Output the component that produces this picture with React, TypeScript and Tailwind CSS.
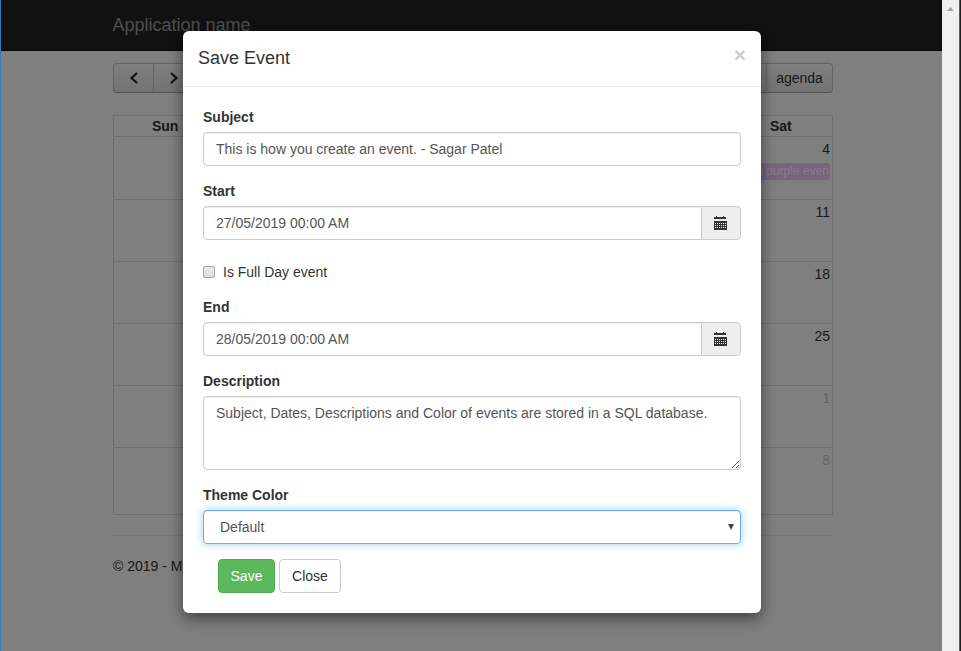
import type { ReactNode } from "react";

const weeks = [
  { day: "4", muted: false, height: "h-[63px]", event: "a purple even" },
  { day: "11", muted: false, height: "h-[62px]" },
  { day: "18", muted: false, height: "h-[62px]" },
  { day: "25", muted: false, height: "h-[62px]" },
  { day: "1", muted: true, height: "h-[62px]" },
  { day: "8", muted: true, height: "h-[67px]" },
];

const toolButton =
  "h-full border border-[#c8c8c8] border-b-[#a8a8a8] bg-linear-to-b from-white to-[#e6e6e6] text-[#333]";

const field =
  "block w-full rounded border border-[#ccc] bg-white px-3 text-sm text-[#555] shadow-[inset_0_1px_1px_rgba(0,0,0,0.075)] outline-none";

function Chevron({ d }: { d: string }) {
  return (
    <svg viewBox="0 0 10 12" className="mx-auto h-3 w-2.5" fill="none" stroke="#222" strokeWidth="2.2">
      <path d={d} />
    </svg>
  );
}

function CalendarIcon() {
  return (
    <svg viewBox="0 0 14 14" className="h-3.5 w-3.5" fill="#333" shapeRendering="crispEdges">
      <path d="M3 0h1v1h6V0h1v1h2v2H1V1h2z" />
      <path
        fillRule="evenodd"
        d="M1 5h13v9H1zM2 7v1h1V7zM4 7v1h1V7zM6 7v1h1V7zM8 7v1h1V7zM10 7v1h1V7zM12 7v1h1V7zM2 9v1h1V9zM4 9v1h1V9zM6 9v1h1V9zM8 9v1h1V9zM10 9v1h1V9zM12 9v1h1V9zM2 11v1h1v-1zM4 11v1h1v-1zM6 11v1h1v-1zM8 11v1h1v-1zM10 11v1h1v-1zM12 11v1h1v-1z"
      />
    </svg>
  );
}

function Field({ id, label, children }: { id: string; label: string; children: ReactNode }) {
  return (
    <div className="mb-[15px]">
      <label htmlFor={id} className="mb-[5px] block font-bold">
        {label}
      </label>
      {children}
    </div>
  );
}

function DateInput({ id, value }: { id: string; value: string }) {
  return (
    <div className="flex">
      <input id={id} type="text" defaultValue={value} className={`${field} h-[34px] min-w-0 flex-1 rounded-r-none`} />
      <button
        type="button"
        aria-label="Open calendar"
        className="-ml-px flex w-10 items-center rounded-r border border-[#ccc] bg-[#eee] pl-[11px]"
      >
        <CalendarIcon />
      </button>
    </div>
  );
}

function CalendarPage() {
  return (
    <div className="min-h-screen bg-white">
      <header className="h-[51px] border-b border-[#080808] bg-[#222] pl-0.5">
        <div className="mx-auto flex h-full max-w-[720px] items-center">
          <a href="#" className="text-lg leading-5 text-[#9d9d9d]">
            Application name
          </a>
        </div>
      </header>
      <main className="pt-3 pl-[3px]">
        <div className="mx-auto max-w-[720px]">
          <div className="mb-[22px] flex h-[30px] justify-between">
            <div className="flex">
              <button type="button" aria-label="Previous" className={`${toolButton} w-[41px] rounded-l`}>
                <Chevron d="M8 1 2.500 6 8 11" />
              </button>
              <button type="button" aria-label="Next" className={`${toolButton} -ml-px w-[41px] rounded-r`}>
                <Chevron d="M2 1 7.500 6 2 11" />
              </button>
            </div>
            <div className="flex">
              <button type="button" aria-label="Day" className={`${toolButton} w-11 rounded-l`} />
              <button type="button" className={`${toolButton} -ml-px w-[67px] rounded-r`}>
                agenda
              </button>
            </div>
          </div>
          <table className="w-full table-fixed border-collapse border border-[#ddd]">
            <thead>
              <tr className="h-[21px] border-b border-[#ddd]">
                <th className="font-bold">Sun</th>
                <th colSpan={5} />
                <th className="font-bold">Sat</th>
              </tr>
            </thead>
            <tbody>
              {weeks.map((week) => (
                <tr key={week.day} className={`${week.height} border-b border-[#ddd]`}>
                  <td />
                  <td colSpan={5} />
                  <td className="p-0 align-top">
                    <div className={`px-0.5 pt-0.5 text-right ${week.muted ? "text-[#333]/30" : ""}`}>{week.day}</div>
                    {week.event && (
                      <div className="mx-0.5 mt-1 flex h-[17px] justify-end overflow-hidden rounded-[3px] bg-[#f0c8ff] px-px text-xs leading-4 whitespace-nowrap text-white">
                        {week.event}
                      </div>
                    )}
                  </td>
                </tr>
              ))}
            </tbody>
          </table>
          <footer className="mt-5 border-t border-[#eee] pt-5">
            <p>© 2019 - My</p>
          </footer>
        </div>
      </main>
    </div>
  );
}

function SaveEventDialog() {
  return (
    <div
      role="dialog"
      aria-labelledby="dialog-title"
      className="mx-auto max-w-[578px] rounded-md bg-white shadow-[0_5px_15px_rgba(0,0,0,0.5)]"
    >
      <div className="flex h-14 items-start justify-between border-b border-[#e5e5e5] px-[15px] pt-3.5">
        <h4 id="dialog-title" className="text-lg leading-[26px]">
          Save Event
        </h4>
        <button type="button" aria-label="Close dialog" className="text-[21px] leading-5 font-bold text-[#ccc]">
          ×
        </button>
      </div>
      <form className="p-5" onSubmit={(e) => e.preventDefault()}>
        <Field id="subject" label="Subject">
          <input
            id="subject"
            type="text"
            defaultValue="This is how you create an event. - Sagar Patel"
            className={`${field} h-[34px]`}
          />
        </Field>
        <Field id="start" label="Start">
          <DateInput id="start" value="27/05/2019 00:00 AM" />
        </Field>
        <div className="pt-[7px] pb-[15px]">
          <label className="flex items-center gap-2">
            <input
              type="checkbox"
              className="h-3 w-3 appearance-none rounded-xs border border-[#a5a5a5] bg-linear-to-b from-[#ededed] to-[#dcdcdc]"
            />
            Is Full Day event
          </label>
        </div>
        <Field id="end" label="End">
          <DateInput id="end" value="28/05/2019 00:00 AM" />
        </Field>
        <Field id="description" label="Description">
          <textarea
            id="description"
            defaultValue="Subject, Dates, Descriptions and Color of events are stored in a SQL database."
            className={`${field} h-[74px] resize py-1.5 leading-5`}
          />
        </Field>
        <Field id="theme" label="Theme Color">
          <div className="relative">
            <select
              id="theme"
              className="block h-[34px] w-full appearance-none rounded border border-[#66afe9] bg-white px-4 text-sm text-[#555] shadow-[inset_0_1px_1px_rgba(0,0,0,0.075),0_0_8px_rgba(102,175,233,0.6)] outline-none"
            >
              <option>Default</option>
            </select>
            <svg viewBox="0 0 6 6" className="pointer-events-none absolute top-3.5 right-[7px] h-1.5 w-1.5" fill="#444">
              <path d="M0 0h6L3 6z" />
            </svg>
          </div>
        </Field>
        <div className="flex gap-1 pl-[15px]">
          <button
            type="submit"
            className="h-[34px] w-[57px] rounded border border-[#4cae4c] bg-[#5cb85c] text-white"
          >
            Save
          </button>
          <button type="button" className="h-[34px] w-[62px] rounded border border-[#ccc] bg-white">
            Close
          </button>
        </div>
      </form>
    </div>
  );
}

export default function App() {
  return (
    <div className="flex h-screen overflow-hidden border-l border-[#3c78b4] font-['Liberation_Sans',Arial,sans-serif] text-sm leading-5 text-[#333]">
      <div className="relative min-w-0 flex-1 overflow-hidden">
        <CalendarPage />
        <div className="absolute inset-0 bg-black/50 pt-[31px] pl-px">
          <SaveEventDialog />
        </div>
      </div>
      <div className="flex w-[17px] justify-center bg-[#f0f0f0] pt-[7px]">
        <svg viewBox="0 0 7 4" className="h-1 w-[7px]" fill="#a3a3a3">
          <path d="M3.500 0 7 4H0z" />
        </svg>
      </div>
      <div className="w-0.5 border-l border-[#1f6fb0] bg-[#1e1e1e]" />
    </div>
  );
}
